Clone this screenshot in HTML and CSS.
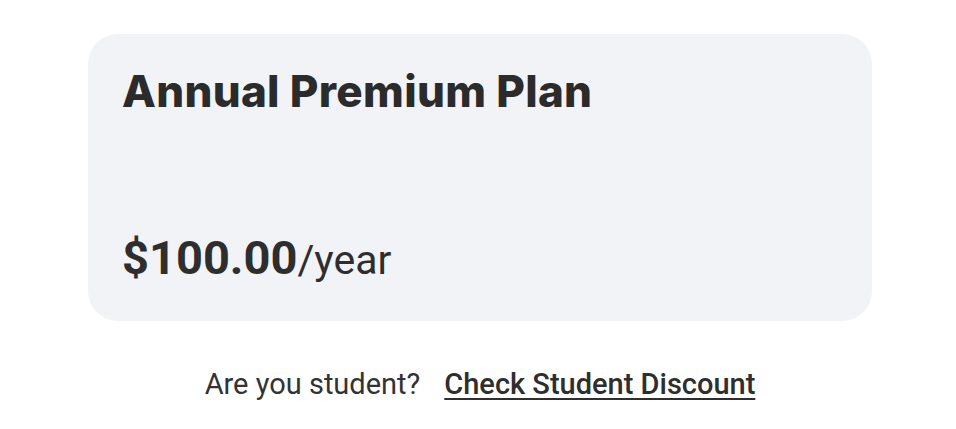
FILE: index.html
```html
<!DOCTYPE html>
<html>
<head>
<meta charset="utf-8">
<link rel="stylesheet" href="styles.css">
</head>
<body>
<main class="page">
  <section class="card">
    <h1 class="title">Annual Premium Plan</h1>
    <p class="price"><span class="amount">$100.00</span><span class="period">/year</span></p>
  </section>
  <p class="student">Are you student?<a class="discount" href="#">Check Student Discount</a></p>
</main>
</body>
</html>
```

FILE: styles.css
```css
* { box-sizing: border-box; }
html, body { margin: 0; padding: 0; background: #ffffff; }
body { font-family: Roboto, "Noto Sans", sans-serif; color: #2e2e2e; }
.page {
  width: 956px;
  height: 429px;
  padding: 34px 84px 0 88px;
  display: flex;
  flex-direction: column;
  align-items: center;
}
.card {
  width: 784px;
  height: 287px;
  background: #f2f3f7;
  border-radius: 30px;
  padding: 0 34px;
  display: flex;
  flex-direction: column;
  justify-content: space-between;
}
.title {
  margin: 31px 0 0;
  font-family: Inter, "Noto Sans", sans-serif;
  font-weight: 800;
  font-size: 44px;
  line-height: 1.2;
  letter-spacing: 0.3px;
  color: #2b2b2b;
}
.price {
  margin: 0 0 40px;
  line-height: 1;
  color: #2e2e2e;
}
.amount { font-weight: 700; font-size: 47px; }
.period { font-weight: 400; font-size: 41px; }
.student {
  margin: 49px 0 0;
  font-size: 29px;
  line-height: 1;
  color: #333333;
}
.discount {
  margin-left: 24px;
  color: #2e2e2e;
  font-weight: 500;
  text-decoration: underline;
  text-underline-offset: 4px;
  text-decoration-thickness: 2px;
}
```
